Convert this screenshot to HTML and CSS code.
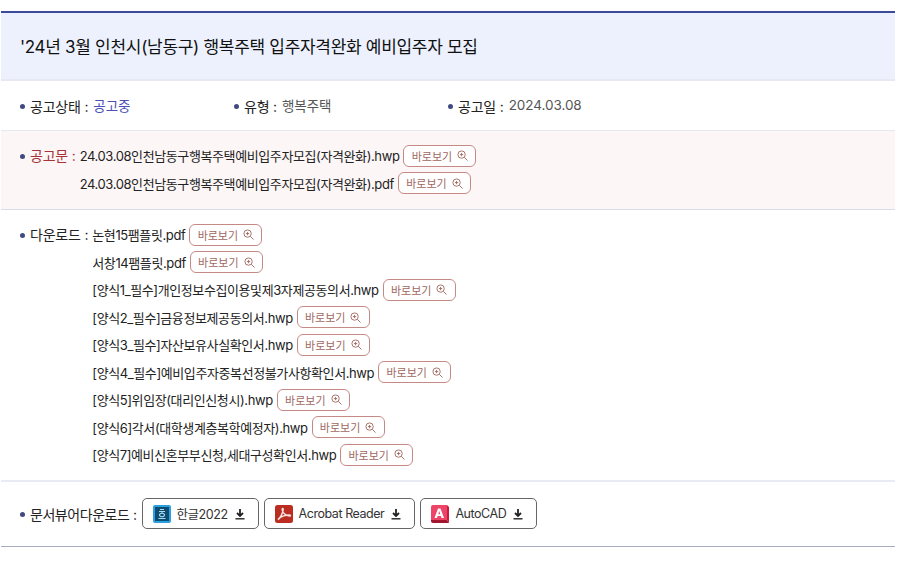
FILE: index.html
```html
<!DOCTYPE html>
<html lang="ko">
<head>
<meta charset="utf-8">
<title>입주자 모집</title>
<link rel="stylesheet" href="styles.css">
</head>
<body>
<main class="board">
  <h1 class="title">'24년 3월 인천시(남동구) 행복주택 입주자격완화 예비입주자 모집</h1>
  <section class="meta">
    <div class="meta-item"><span class="label">공고상태 :</span><span class="val blue">공고중</span></div>
    <div class="meta-item"><span class="label">유형 :</span><span class="val">행복주택</span></div>
    <div class="meta-item"><span class="label">공고일 :</span><span class="val">2024.03.08</span></div>
  </section>
  <section class="files notice">
    <span class="label red">공고문 :</span>
    <ul class="file-list">
      <li>24.03.08인천남동구행복주택예비입주자모집(자격완화).hwp<a class="view">바로보기<svg class="zoom" viewBox="0 0 12 12"><circle cx="5" cy="5" r="4"/><path d="M3.200 5h3.600M5 3.200v3.600M8 8L11.500 11.500"/></svg></a></li>
      <li>24.03.08인천남동구행복주택예비입주자모집(자격완화).pdf<a class="view">바로보기<svg class="zoom" viewBox="0 0 12 12"><circle cx="5" cy="5" r="4"/><path d="M3.200 5h3.600M5 3.200v3.600M8 8L11.500 11.500"/></svg></a></li>
    </ul>
  </section>
  <section class="files downloads">
    <span class="label">다운로드 :</span>
    <ul class="file-list">
      <li>논현15팸플릿.pdf<a class="view">바로보기<svg class="zoom" viewBox="0 0 12 12"><circle cx="5" cy="5" r="4"/><path d="M3.200 5h3.600M5 3.200v3.600M8 8L11.500 11.500"/></svg></a></li>
      <li>서창14팸플릿.pdf<a class="view">바로보기<svg class="zoom" viewBox="0 0 12 12"><circle cx="5" cy="5" r="4"/><path d="M3.200 5h3.600M5 3.200v3.600M8 8L11.500 11.500"/></svg></a></li>
      <li>[양식1_필수]개인정보수집이용및제3자제공동의서.hwp<a class="view">바로보기<svg class="zoom" viewBox="0 0 12 12"><circle cx="5" cy="5" r="4"/><path d="M3.200 5h3.600M5 3.200v3.600M8 8L11.500 11.500"/></svg></a></li>
      <li>[양식2_필수]금융정보제공동의서.hwp<a class="view">바로보기<svg class="zoom" viewBox="0 0 12 12"><circle cx="5" cy="5" r="4"/><path d="M3.200 5h3.600M5 3.200v3.600M8 8L11.500 11.500"/></svg></a></li>
      <li>[양식3_필수]자산보유사실확인서.hwp<a class="view">바로보기<svg class="zoom" viewBox="0 0 12 12"><circle cx="5" cy="5" r="4"/><path d="M3.200 5h3.600M5 3.200v3.600M8 8L11.500 11.500"/></svg></a></li>
      <li>[양식4_필수]예비입주자중복선정불가사항확인서.hwp<a class="view">바로보기<svg class="zoom" viewBox="0 0 12 12"><circle cx="5" cy="5" r="4"/><path d="M3.200 5h3.600M5 3.200v3.600M8 8L11.500 11.500"/></svg></a></li>
      <li>[양식5]위임장(대리인신청시).hwp<a class="view">바로보기<svg class="zoom" viewBox="0 0 12 12"><circle cx="5" cy="5" r="4"/><path d="M3.200 5h3.600M5 3.200v3.600M8 8L11.500 11.500"/></svg></a></li>
      <li>[양식6]각서(대학생계층복학예정자).hwp<a class="view">바로보기<svg class="zoom" viewBox="0 0 12 12"><circle cx="5" cy="5" r="4"/><path d="M3.200 5h3.600M5 3.200v3.600M8 8L11.500 11.500"/></svg></a></li>
      <li>[양식7]예비신혼부부신청,세대구성확인서.hwp<a class="view">바로보기<svg class="zoom" viewBox="0 0 12 12"><circle cx="5" cy="5" r="4"/><path d="M3.200 5h3.600M5 3.200v3.600M8 8L11.500 11.500"/></svg></a></li>
    </ul>
  </section>
  <section class="viewers">
    <span class="label">문서뷰어다운로드 :</span>
    <a class="dl">
      <svg class="app" viewBox="0 0 18 18"><rect width="18" height="18" rx="2" fill="#2aa0e0"/><rect x="2" y="2" width="14" height="14" fill="#0f4a70"/><path d="M7 4.500h4M6 6.500h6M9 6.500v1.500M6.500 10a2.500 1.700 0 1 0 5 0a2.500 1.700 0 1 0-5 0M5.500 13.500h7" fill="none" stroke="#a5dcf2" stroke-width="1.100"/></svg>
      한글2022
      <svg class="down" viewBox="0 0 12 12"><path d="M6 1v6.500M3 5l3 3 3-3" fill="none" stroke="#222" stroke-width="1.800"/><path d="M1.500 10.800h9" stroke="#222" stroke-width="1.400"/></svg>
    </a>
    <a class="dl">
      <svg class="app" viewBox="0 0 18 18"><rect width="18" height="18" rx="2.500" fill="#bb2d20"/><path d="M3 14.500c2.300-1.200 4.800-6.500 5.200-10c.1-1.300-1-1.300-1-.1c.1 3 3.300 6.600 7.300 6.700c1.200 0 1.200-1-.2-1c-3.500 0-8.300 1.400-11.300 4.400z" fill="none" stroke="#fbe6e2" stroke-width="1.500"/></svg>
      Acrobat Reader
      <svg class="down" viewBox="0 0 12 12"><path d="M6 1v6.500M3 5l3 3 3-3" fill="none" stroke="#222" stroke-width="1.800"/><path d="M1.500 10.800h9" stroke="#222" stroke-width="1.400"/></svg>
    </a>
    <a class="dl">
      <svg class="app" viewBox="0 0 18 18"><path d="M0 2a2 2 0 0 1 2-2h14v15H0z" fill="#ee4468"/><path d="M0 15h16l2 3H2a2 2 0 0 1-2-2z" fill="#a3142f"/><path d="M16 0l2 2v16l-2-3z" fill="#c81e3e"/><path d="M3.500 13L7 3.500h2.500L13 13h-2.500l-.6-2H6.600L6 13zM7.300 9.200h1.900L8.250 6z" fill="#fff"/></svg>
      AutoCAD
      <svg class="down" viewBox="0 0 12 12"><path d="M6 1v6.500M3 5l3 3 3-3" fill="none" stroke="#222" stroke-width="1.800"/><path d="M1.500 10.800h9" stroke="#222" stroke-width="1.400"/></svg>
    </a>
  </section>
</main>
</body>
</html>
```
FILE: styles.css
```css
* { box-sizing: border-box; }
html, body { margin: 0; padding: 0; background: #fff; }
body {
  padding: 11px 5px 0 1px;
  font-family: Inter, "Noto Sans CJK KR", sans-serif;
  color: #222;
  font-size: 13px;
  letter-spacing: -0.4px;
}
.board { border-top: 2px solid #3b4a9b; border-bottom: 1px solid #a9adc4; }
.title {
  margin: 0;
  height: 68px;
  padding: 0 19px 2px;
  display: flex;
  align-items: center;
  background: #edf1fd;
  border-bottom: 2px solid #e6e9f2;
  font-size: 17px;
  font-weight: 400;
  color: #111;
  letter-spacing: -0.3px;
}
.label {
  position: relative;
  padding-left: 10px;
  margin-left: 19px;
  flex: none;
  color: #222;
  white-space: nowrap;
  font-size: 14px;
  letter-spacing: -0.2px;
}
.label::before {
  content: "";
  position: absolute;
  left: 0;
  top: 50%;
  margin-top: -2px;
  width: 5px;
  height: 5px;
  border-radius: 50%;
  background: #414a80;
}
.meta {
  height: 50px;
  display: flex;
  align-items: center;
  border-bottom: 1px solid #e6e9f2;
}
.meta-item { width: 214px; display: flex; gap: 5px; align-items: center; }
.val { color: #555; position: relative; bottom: 1px; font-size: 13.5px; letter-spacing: -0.05px; }
.blue { color: #4a52b5; }
.files {
  display: flex;
  align-items: flex-start;
  padding: 11px 0;
  border-bottom: 2px solid #e9ebf3;
}
.files > .label { line-height: 27px; }
.notice {
  background: #fdf6f6;
  border-bottom: 1px solid #d9dce8;
  height: 79px;
}
.red { color: #a8323a; }
.file-list {
  list-style: none;
  margin: 0 0 0 4px;
  padding: 0;
  color: #222;
}
.file-list li {
  height: 27.500px;
  display: flex;
  align-items: center;
  white-space: nowrap;
}
.view {
  margin-left: 4px;
  width: 73px;
  height: 22px;
  border: 1px solid #c68a86;
  border-radius: 6px;
  display: inline-flex;
  align-items: center;
  justify-content: center;
  gap: 5px;
  font-size: 11px;
  color: #a0685f;
  background: #fff;
  letter-spacing: 0;
}
.zoom { width: 11px; height: 11px; fill: none; stroke: #a0685f; stroke-width: 1; }
.viewers {
  height: 64px;
  display: flex;
  align-items: center;
}
.viewers .label { margin-right: 5px; letter-spacing: -0.45px; }
.dl {
  margin-right: 5px;
  height: 31px;
  padding: 0 12px 0 10px;
  border: 1px solid #666;
  border-radius: 5px;
  display: inline-flex;
  align-items: center;
  font-size: 12.5px;
  letter-spacing: -0.45px;
  color: #333;
}
.app { width: 18px; height: 18px; margin-right: 6px; }
.down { width: 12px; height: 12px; margin-left: 6px; }
```
